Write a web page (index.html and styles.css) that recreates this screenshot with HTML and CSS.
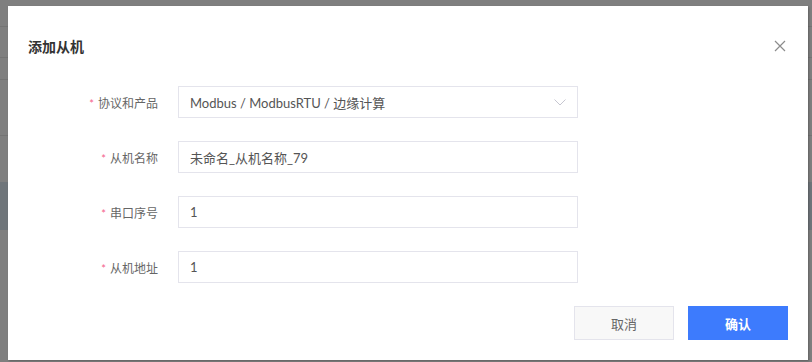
FILE: index.html
```html
<!DOCTYPE html>
<html lang="zh-CN">

<head>
  <meta charset="UTF-8" />
  <title>添加从机</title>
  <link rel="stylesheet" href="styles.css">
</head>

<body>
  <!-- 背景页面(被遮罩) -->
  <div class="page">
    <div class="row r1"></div>
    <div class="row r2"></div>
    <div class="row r3"></div>
    <div class="row r4"></div>
    <div class="row r5"></div>
    <div class="row active"></div>
  </div>

  <!-- 弹窗 -->
  <div class="dialog">
    <div class="dialog-header">
      <span class="title">添加从机</span>
      <span class="close">
        <svg width="12" height="12" viewBox="0 0 12 12">
          <path d="M1 1 L11 11 M11 1 L1 11" stroke="#8c8c8c" stroke-width="1.2" fill="none" />
        </svg>
      </span>
    </div>
    <div class="dialog-body">
      <div class="form-item">
        <label><i>*</i>协议和产品</label>
        <div class="field select">
          <span>Modbus / ModbusRTU / 边缘计算</span>
          <svg class="arrow" width="12" height="7" viewBox="0 0 12 7">
            <path d="M0.5 0.5 L6 6 L11.5 0.5" stroke="#c6c6d0" stroke-width="1" fill="none" />
          </svg>
        </div>
      </div>
      <div class="form-item">
        <label><i>*</i>从机名称</label>
        <div class="field">未命名_从机名称_79</div>
      </div>
      <div class="form-item">
        <label><i>*</i>串口序号</label>
        <div class="field">1</div>
      </div>
      <div class="form-item">
        <label><i>*</i>从机地址</label>
        <div class="field">1</div>
      </div>
    </div>
    <div class="dialog-footer">
      <button class="btn cancel">取消</button>
      <button class="btn primary">确认</button>
    </div>
  </div>
</body>

</html>
```

FILE: styles.css
```css
body {
  margin: 0;
  padding: 0;
  background-color: #7f7f7f;
  font-family: "Lato", "Noto Sans CJK SC", sans-serif;
  height: 362px;
  overflow: hidden;
}

.page .row {
  border-bottom: 1px solid #747474;
}

.page .r1 {
  height: 26px;
}

.page .r2 {
  height: 30px;
}

.page .r3 {
  height: 21px;
}

.page .r4 {
  height: 55px;
}

.page .r5 {
  height: 46px;
  border-bottom: none;
}

.page .active {
  height: 48px;
  background-color: #6f757a;
  border-bottom: none;
}

.dialog {
  position: absolute;
  left: 8px;
  top: 6px;
  width: 800px;
  height: 354px;
  box-sizing: border-box;
  background-color: #fff;
  box-shadow: 1px 1px 2px rgba(0, 0, 0, 0.25);
}

.dialog-header {
  display: flex;
  justify-content: space-between;
  align-items: center;
  height: 20px;
  padding: 30px 22px 0 20px;
}

.title {
  font-size: 14px;
  font-weight: bold;
  color: #333;
}

.close {
  display: flex;
}

.dialog-body {
  display: flex;
  flex-direction: column;
  gap: 23px;
  padding-top: 30px;
}

.form-item {
  display: flex;
  align-items: center;
  gap: 20px;
}

.form-item label {
  width: 150px;
  text-align: right;
  font-size: 12px;
  color: #666;
}

.form-item label i {
  font-style: normal;
  font-size: 11px;
  color: #f4608a;
  margin-right: 4px;
}

.field {
  display: flex;
  align-items: center;
  justify-content: space-between;
  width: 400px;
  height: 32px;
  box-sizing: border-box;
  padding: 0 11px;
  border: 1px solid #e4e4ec;
  font-size: 13px;
  color: #555;
}

.dialog-footer {
  display: flex;
  justify-content: flex-end;
  gap: 14px;
  padding: 23px 20px 0 0;
}

.btn {
  width: 100px;
  height: 34px;
  font-family: inherit;
  font-size: 13px;
  border: 1px solid #e4e4ec;
  cursor: pointer;
}

.btn.cancel {
  background-color: #f8f8f8;
  color: #666;
}

.btn.primary {
  background-color: #3d7bfd;
  border-color: #3d7bfd;
  color: #fff;
  font-weight: bold;
}
```
